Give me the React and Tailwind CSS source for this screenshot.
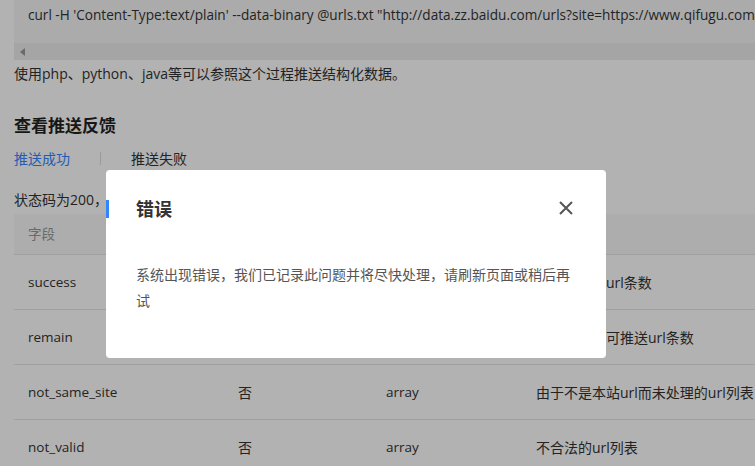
import React from "react";

const rows = [
  ["success", "是", "int", "成功推送的url条数"],
  ["remain", "是", "int", "当天剩余的可推送url条数"],
  ["not_same_site", "否", "array", "由于不是本站url而未处理的url列表"],
  ["not_valid", "否", "array", "不合法的url列表"],
];

function Row({ cells, header }) {
  return (
    <div
      className={
        "flex border-b border-[#e6e6e6] " +
        (header ? "h-[41px] bg-[#f8f8f8] text-[#999]" : "h-[55px] text-[#333]")
      }
    >
      <div className="w-[210px] shrink-0 pl-[14px] flex items-center text-[13.5px]">{cells[0]}</div>
      <div className="w-[148px] shrink-0 pl-[14px] flex items-center">{cells[1]}</div>
      <div className="w-[150px] shrink-0 pl-[14px] flex items-center text-[13.5px]">{cells[2]}</div>
      <div className="flex-1 pl-[14px] flex items-center whitespace-nowrap">{cells[3]}</div>
    </div>
  );
}

export default function App() {
  return (
    <div
      className="w-[755px] h-[466px] overflow-hidden bg-white relative text-[14px] text-[#333]"
      style={{ fontFamily: '"Open Sans", "Noto Sans CJK SC", sans-serif' }}
    >
      <div className="pl-[14px]">
        {/* code block */}
        <div className="bg-[#f5f5f5] w-[800px]">
          <div className="h-[43px] pl-[14px] pt-[4px] leading-[22px] whitespace-nowrap text-[13.6px] text-[#333]">
            curl -H 'Content-Type:text/plain' --data-binary @urls.txt "http://data.zz.baidu.com/urls?site=https://www.qifugu.com&amp;token=xxxx"
          </div>
          <div className="h-[17px] bg-[#ececec] flex items-center pl-[6px]">
            <svg width="6" height="8" viewBox="0 0 6 8">
              <path d="M5 0 L0 4 L5 8 Z" fill="#999" />
            </svg>
          </div>
        </div>
        <div className="h-[28px] leading-[28px]">使用php、python、java等可以参照这个过程推送结构化数据。</div>
        <div className="mt-[26px] h-[24px] leading-[24px] text-[17px] font-bold text-[#222]">查看推送反馈</div>
        <div className="mt-[10px] h-[20px] flex items-center">
          <span className="text-[#3385ff]">推送成功</span>
          <span className="mx-[30px] w-px h-[13px] bg-[#ddd]" />
          <span>推送失败</span>
        </div>
        <div className="mt-[22px] h-[20px] leading-[20px]">状态码为200，返回数据</div>
        <div className="mt-[4px] w-[760px]">
          <Row header cells={["字段", "是否必选", "参数类型", "说明"]} />
          {rows.map((r) => (
            <Row key={r[0]} cells={r} />
          ))}
        </div>
      </div>

      {/* overlay */}
      <div className="absolute inset-0 bg-black/30" />

      {/* modal */}
      <div className="absolute left-[106px] top-[170px] w-[500px] h-[188px] bg-white rounded-[4px] pt-[30px]">
        <div className="flex items-center justify-between h-[18px] border-l-[3px] border-[#3385ff] pl-[27px] pr-[33px]">
          <span className="text-[18px] font-bold text-[#333] leading-[18px]">错误</span>
          <svg width="14" height="14" viewBox="0 0 14 14" className="-mt-[2px]">
            <path d="M1 1 L13 13 M13 1 L1 13" stroke="#555" strokeWidth="2" fill="none" />
          </svg>
        </div>
        <div className="mt-[44px] px-[30px] leading-[26px] text-[#555]">
          系统出现错误，我们已记录此问题并将尽快处理，请刷新页面或稍后再试
        </div>
      </div>
    </div>
  );
}
